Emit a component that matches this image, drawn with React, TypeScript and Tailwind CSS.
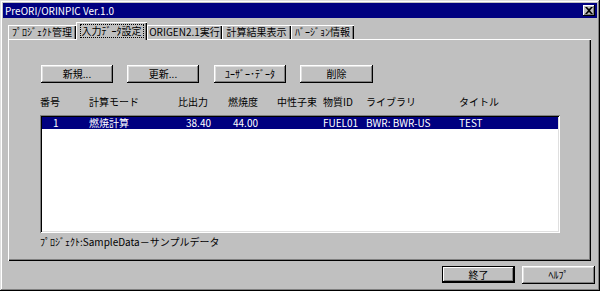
const FONT = "font-['Noto_Sans_CJK_JP','Liberation_Sans',sans-serif]";

function Btn({ label, w, def }: { label: string; w: string; def?: boolean }) {
  if (def) {
    return (
      <div className={`${w} h-[17px] border border-black bg-[#c0c0c0]`}>
        <div className="w-full h-full flex items-center justify-center shadow-[inset_-1px_-1px_0_#000,inset_1px_1px_0_#fff,inset_-2px_-2px_0_#808080] text-[10px] leading-none text-black">
          {label}
        </div>
      </div>
    );
  }
  return (
    <div
      className={`${w} h-[18px] bg-[#c0c0c0] flex items-center justify-center shadow-[inset_-1px_-1px_0_#000,inset_1px_1px_0_#fff,inset_-2px_-2px_0_#808080,inset_2px_2px_0_#dfdfdf] text-[10px] leading-none text-black`}
    >
      {label}
    </div>
  );
}

function Tab({ label, w }: { label: string; w: string }) {
  return (
    <div
      className={`${w} h-[14px] bg-[#c0c0c0] flex items-center justify-center shadow-[inset_1px_1px_0_#fff,inset_-1px_0_0_#000,inset_-2px_0_0_#808080] text-[10px] leading-none text-black whitespace-nowrap`}
    >
      {label}
    </div>
  );
}

export default function App() {
  return (
    <div
      className={`${FONT} w-[600px] h-[291px] bg-[#c0c0c0] p-[3px] flex flex-col shadow-[inset_-1px_-1px_0_#000,inset_1px_1px_0_#dfdfdf,inset_-2px_-2px_0_#808080,inset_2px_2px_0_#fff] overflow-hidden`}
    >
      {/* Title bar */}
      <div className="h-[15px] bg-[#000080] flex items-center justify-between pl-[2px] pr-[2px] shrink-0">
        <span className="text-white text-[10px] leading-none">PreORI/ORINPIC Ver.1.0</span>
        <div className="w-[12px] h-[11px] bg-[#c0c0c0] flex items-center justify-center shadow-[inset_-1px_-1px_0_#000,inset_1px_1px_0_#fff,inset_-2px_-2px_0_#808080]">
          <svg width="8" height="7" viewBox="0 0 8 7">
            <path d="M0 0h2l2 2 2-2h2L5 3.5 8 7H6L4 5 2 7H0l3-3.5z" fill="#000" />
          </svg>
        </div>
      </div>

      {/* Tabs */}
      <div className="mt-[4px] ml-[5px] h-[17px] flex items-end shrink-0">
        <Tab label="ﾌﾟﾛｼﾞｪｸﾄ管理" w="w-[68px]" />
        <div className="relative z-10 -mb-[1px] w-[71px] h-[18px] bg-[#c0c0c0] flex items-center justify-center shadow-[inset_1px_1px_0_#fff,inset_-1px_0_0_#000,inset_-2px_0_0_#808080] pb-[1px]">
          <span className="border border-dotted border-black px-[1px] text-[10px] leading-[12px] text-black whitespace-nowrap">
            入力ﾃﾞｰﾀ設定
          </span>
        </div>
        <Tab label="ORIGEN2.1実行" w="w-[75px]" />
        <Tab label="計算結果表示" w="w-[69px]" />
        <Tab label="ﾊﾞｰｼﾞｮﾝ情報" w="w-[63px]" />
      </div>

      {/* Panel */}
      <div className="ml-[5px] w-[583px] h-[222px] shrink-0 bg-[#c0c0c0] shadow-[inset_1px_1px_0_#fff,inset_-1px_-1px_0_#000,inset_-2px_-2px_0_#808080] pt-[26px] pl-[32px] flex flex-col">
        <div className="flex pl-[1px]">
          <Btn label="新規..." w="w-[72px]" />
          <div className="ml-[14px]">
            <Btn label="更新..." w="w-[72px]" />
          </div>
          <div className="ml-[15px]">
            <Btn label="ﾕｰｻﾞｰ･ﾃﾞｰﾀ" w="w-[72px]" />
          </div>
          <div className="ml-[14px]">
            <Btn label="削除" w="w-[73px]" />
          </div>
        </div>

        {/* Header */}
        <div className="mt-[13px] h-[12px] flex text-[10px] leading-[12px] text-black whitespace-nowrap">
          <div className="w-[49px]">番号</div>
          <div className="w-[89px]">計算モード</div>
          <div className="w-[50px]">比出力</div>
          <div className="w-[49px]">燃焼度</div>
          <div className="w-[46px]">中性子束</div>
          <div className="w-[43px]">物質ID</div>
          <div className="w-[93px]">ライブラリ</div>
          <div>タイトル</div>
        </div>

        {/* List */}
        <div className="mt-[7px] w-[520px] h-[118px] bg-white p-[2px] shadow-[inset_1px_1px_0_#808080,inset_-1px_-1px_0_#fff,inset_2px_2px_0_#000,inset_-2px_-2px_0_#dfdfdf]">
          <div className="h-[12px] bg-[#000080] flex text-[10px] leading-[12px] text-white whitespace-nowrap">
            <div className="w-[47px] pl-[11px]">1</div>
            <div className="w-[89px]">燃焼計算</div>
            <div className="w-[50px] pl-[8px]">38.40</div>
            <div className="w-[49px] pl-[5px]">44.00</div>
            <div className="w-[46px]"></div>
            <div className="w-[43px]">FUEL01</div>
            <div className="w-[93px]">BWR: BWR-US</div>
            <div>TEST</div>
          </div>
        </div>

        <div className="mt-[3px] h-[12px] text-[10px] leading-[12px] text-black whitespace-nowrap">
          ﾌﾟﾛｼﾞｪｸﾄ:SampleData－サンプルデータ
        </div>
      </div>

      {/* Bottom buttons */}
      <div className="mt-[5px] flex justify-end pr-[2px] gap-[7px]">
        <Btn label="終了" w="w-[73px]" def />
        <Btn label="ﾍﾙﾌﾟ" w="w-[73px]" />
      </div>
    </div>
  );
}
